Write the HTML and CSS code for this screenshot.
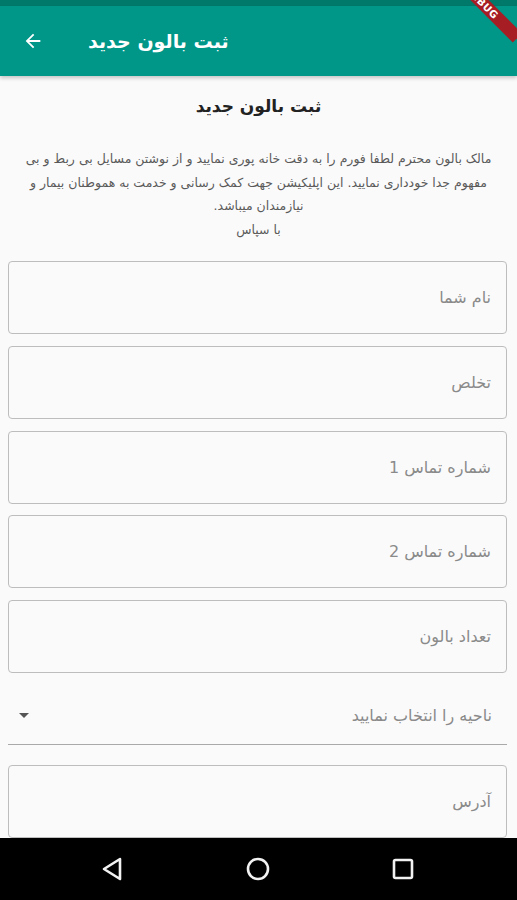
FILE: index.html
```html
<!DOCTYPE html>
<html lang="fa">
<head>
<meta charset="utf-8">
<title>ثبت بالون جدید</title>
<link rel="stylesheet" href="styles.css">
</head>
<body>
<div class="screen">
  <div class="status-bar"></div>
  <header class="app-bar">
    <span class="back">
      <svg width="22" height="22" viewBox="0 0 24 24"><path d="M20 11H7.83l5.59-5.59L12 4l-8 8 8 8 1.41-1.41L7.83 13H20v-2z" fill="#fff"/></svg>
    </span>
    <h1 class="app-title" dir="rtl">ثبت بالون جدید</h1>
  </header>
  <main class="content">
    <h2 class="heading" dir="rtl">ثبت بالون جدید</h2>
    <p class="intro" dir="rtl">مالک بالون محترم لطفا فورم را به دقت خانه پوری نمایید و از نوشتن مسایل بی ربط و بی<br>مفهوم جدا خودداری نمایید. این اپلیکیشن جهت کمک رسانی و خدمت به هموطنان بیمار و<br>نیازمندان میباشد.<br>با سپاس</p>
    <div class="form">
      <div class="field"><span class="hint" dir="rtl">نام شما</span></div>
      <div class="field"><span class="hint" dir="rtl">تخلص</span></div>
      <div class="field"><span class="hint" dir="rtl">شماره تماس 1</span></div>
      <div class="field"><span class="hint" dir="rtl">شماره تماس 2</span></div>
      <div class="field"><span class="hint" dir="rtl">تعداد بالون</span></div>
      <div class="select">
        <svg class="caret" width="12" height="7" viewBox="0 0 12 7"><path d="M1 1h10L6 6z" fill="#555"/></svg>
        <span class="select-text" dir="rtl">ناحیه را انتخاب نمایید</span>
      </div>
      <div class="field field-address"><span class="hint" dir="rtl">آدرس</span></div>
    </div>
  </main>
  <nav class="nav-bar">
    <svg width="24" height="26" viewBox="0 0 24 26"><path d="M20 3 L4 13 L20 23 Z" fill="none" stroke="#f2f2f2" stroke-width="2.6" stroke-linejoin="round"/></svg>
    <svg width="26" height="26" viewBox="0 0 26 26"><circle cx="13" cy="13" r="10" fill="none" stroke="#f2f2f2" stroke-width="2.6"/></svg>
    <svg width="24" height="24" viewBox="0 0 24 24"><rect x="3" y="3" width="18" height="18" rx="1.5" fill="none" stroke="#f2f2f2" stroke-width="2.6"/></svg>
  </nav>
  <div class="debug-banner">DEBUG</div>
</div>
</body>
</html>
```

FILE: styles.css
```css
* { box-sizing: border-box; }
html, body { margin: 0; padding: 0; }
body {
  width: 517px;
  height: 900px;
  overflow: hidden;
  background: #fafafa;
  font-family: "DejaVu Sans", "Noto Sans", sans-serif;
}
.screen {
  position: relative;
  width: 517px;
  height: 900px;
  overflow: hidden;
  display: flex;
  flex-direction: column;
}
.status-bar {
  height: 6px;
  background: #00796b;
  flex: none;
}
.app-bar {
  flex: none;
  height: 70px;
  background: #009688;
  display: flex;
  align-items: center;
  padding-left: 22px;
  box-shadow: 0 2px 4px rgba(0,0,0,0.22);
  position: relative;
  z-index: 1;
}
.back {
  width: 22px;
  height: 22px;
  display: flex;
}
.app-title {
  margin: 0 0 0 44px;
  color: #fff;
  font-size: 19px;
  font-weight: bold;
  line-height: 24px;
}
.content {
  flex: 1;
  overflow: hidden;
  padding-top: 18px;
}
.heading {
  margin: 0;
  text-align: center;
  font-size: 17px;
  line-height: 24px;
  font-weight: bold;
  color: #222;
}
.intro {
  margin: 29px 0 0;
  text-align: center;
  font-size: 12.5px;
  line-height: 23.5px;
  color: #5a5a5a;
}
.form {
  margin-top: 20px;
  padding: 0 10px 0 8px;
  display: flex;
  flex-direction: column;
}
.field {
  height: 73px;
  border: 1px solid #bdbdbd;
  border-radius: 4px;
  display: flex;
  align-items: center;
  justify-content: flex-end;
  padding-right: 15px;
  margin-bottom: 11.75px;
}
.hint {
  font-size: 16px;
  color: #8a8a8a;
}
.select {
  margin-top: -11.75px;
  height: 72px;
  border-bottom: 1.5px solid #a9a9a9;
  display: flex;
  align-items: center;
  justify-content: space-between;
  padding: 14px 15px 0 10px;
}
.select-text {
  font-size: 16px;
  color: #8a8a8a;
}
.caret { display: block; }
.field-address {
  margin-top: 20px;
}
.nav-bar {
  flex: none;
  height: 62px;
  background: #000;
  display: flex;
  align-items: center;
  justify-content: space-between;
  padding: 0 102px 0 100px;
}
.debug-banner {
  position: absolute;
  left: 432px;
  top: -4px;
  width: 100px;
  height: 13px;
  transform: rotate(45deg);
  background: #a61d24;
  color: #fff;
  font-family: "DejaVu Sans", sans-serif;
  font-weight: bold;
  font-size: 10px;
  line-height: 13px;
  text-align: center;
  letter-spacing: 0.5px;
  z-index: 2;
}
```
